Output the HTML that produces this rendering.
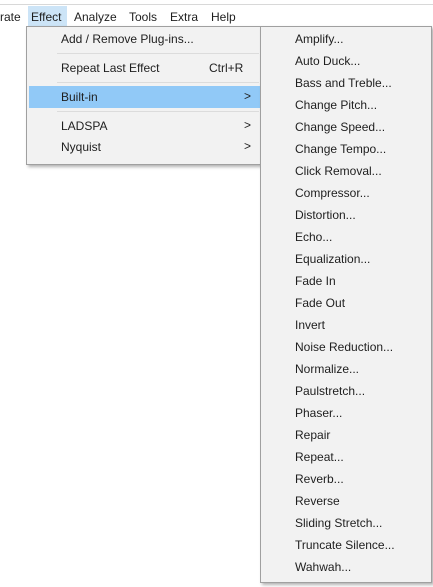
<!DOCTYPE html><html><head><style>
body{margin:0;width:433px;height:587px;background:#fff;font-family:"Liberation Sans",Arial,sans-serif;font-size:12px;color:#1e1e1e;position:relative;overflow:hidden}
.a{position:absolute;white-space:nowrap}
.bar{position:absolute;left:0;top:4px;width:433px;height:22px;background:#fff;border-top:1px solid #d8d8d8}
.m{position:absolute;background:#f2f2f2;border:1px solid #a0a0a0;box-shadow:2px 2px 3px rgba(0,0,0,.3)}
.sep{position:absolute;height:1px;background:#dcdcdc;left:30px;right:3px}
</style></head><body>
<div class="bar"></div>
<div class="a" style="left:28px;top:6px;width:39px;height:20px;background:#cce4f7"></div>
<div class="a" style="left:0;top:10px">rate</div>
<div class="a" style="left:31px;top:10px">Effect</div>
<div class="a" style="left:74px;top:10px">Analyze</div>
<div class="a" style="left:129px;top:10px">Tools</div>
<div class="a" style="left:170px;top:10px">Extra</div>
<div class="a" style="left:211px;top:10px">Help</div>

<div class="m" style="left:26px;top:26px;width:233px;height:137px"></div>
<div class="a" style="left:61px;top:32px">Add / Remove Plug-ins...</div>
<div class="sep" style="left:57px;width:202px;top:53px"></div>
<div class="a" style="left:61px;top:61px">Repeat Last Effect</div>
<div class="a" style="left:209px;top:61px">Ctrl+R</div>
<div class="sep" style="left:57px;width:202px;top:82px"></div>
<div class="a" style="left:29px;top:86px;width:231px;height:22px;background:#91c9f7"></div>
<div class="a" style="left:61px;top:90px">Built-in</div>
<div class="a" style="left:244px;top:89px">&gt;</div>
<div class="sep" style="left:57px;width:202px;top:111px"></div>
<div class="a" style="left:61px;top:119px">LADSPA</div>
<div class="a" style="left:244px;top:118px">&gt;</div>
<div class="a" style="left:61px;top:140px">Nyquist</div>
<div class="a" style="left:244px;top:139px">&gt;</div>

<div class="m" style="left:260px;top:26px;width:170px;height:555px"></div>
<div class="a" style="left:295px;top:28px;line-height:22px">Amplify...<br>Auto Duck...<br>Bass and Treble...<br>Change Pitch...<br>Change Speed...<br>Change Tempo...<br>Click Removal...<br>Compressor...<br>Distortion...<br>Echo...<br>Equalization...<br>Fade In<br>Fade Out<br>Invert<br>Noise Reduction...<br>Normalize...<br>Paulstretch...<br>Phaser...<br>Repair<br>Repeat...<br>Reverb...<br>Reverse<br>Sliding Stretch...<br>Truncate Silence...<br>Wahwah...</div>
</body></html>
